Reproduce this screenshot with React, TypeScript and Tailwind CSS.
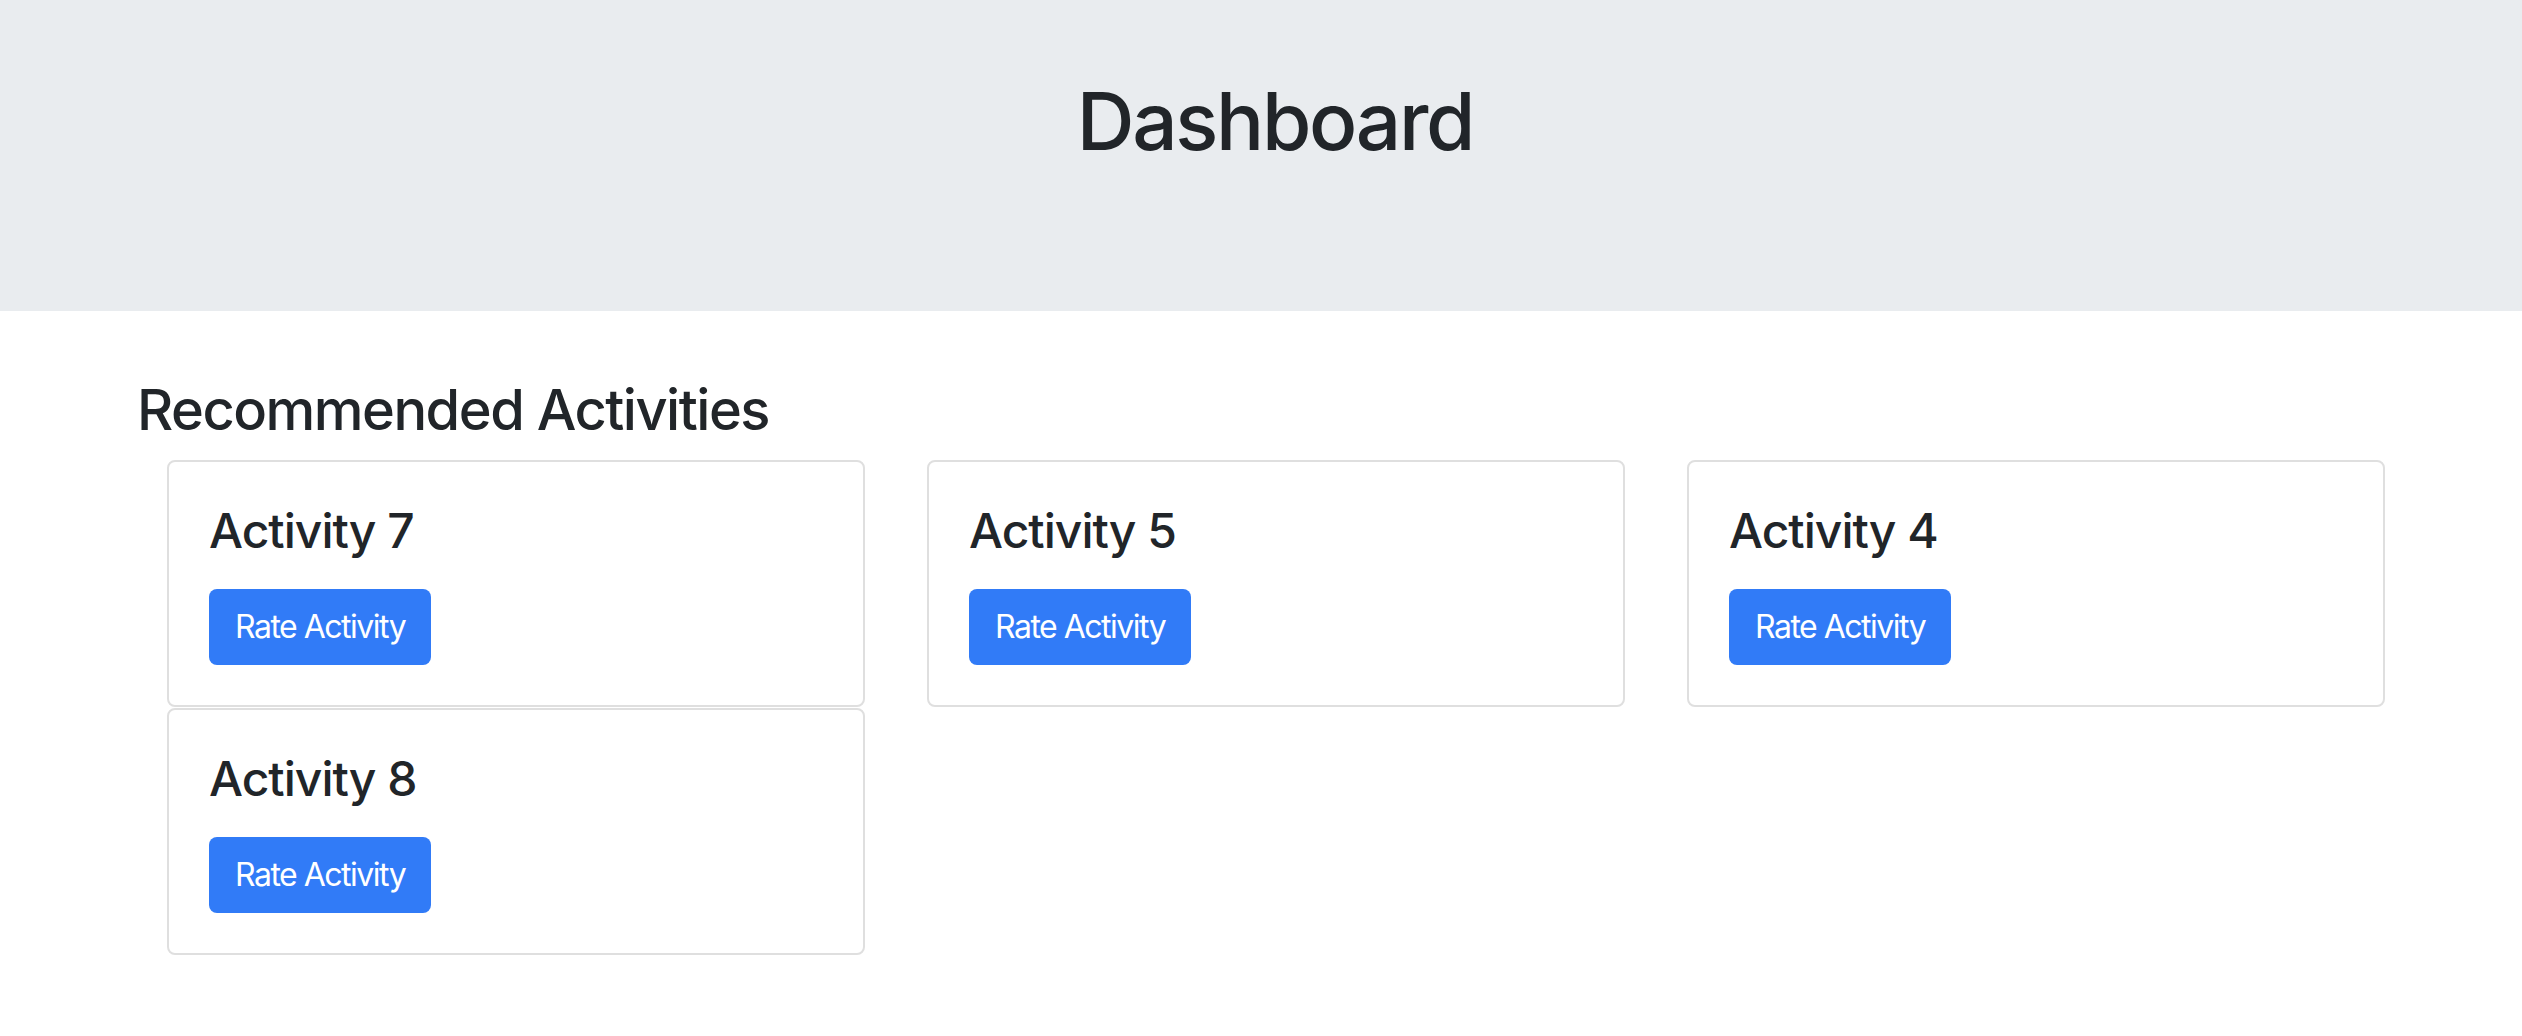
import React from "react";

const activities = ["Activity 7", "Activity 5", "Activity 4", "Activity 8"];

function Card({ title }: { title: string }) {
  return (
    <div className="border-2 border-[#dfdfdf] rounded-[8px] bg-white px-[40px] pt-[40px] pb-[40px]">
      <h4 className="text-[48px] leading-[58px] font-medium tracking-[-1px] text-[#212529] mb-[29px]">{title}</h4>
      <button className="h-[76px] px-[26px] rounded-[8px] bg-[#317bf7] text-white text-[32px] leading-[48px] font-normal tracking-[-1.5px]">
        Rate Activity
      </button>
    </div>
  );
}

export default function App() {
  return (
    <div className="min-h-screen bg-white text-[#212529]" style={{ fontFamily: "Inter, 'Noto Sans', sans-serif" }}>
      <header className="h-[311px] bg-[#e9ecef] pt-[73px] pl-[28px]">
        <h1 className="text-center text-[80px] leading-[96px] font-medium tracking-[-2.3px]">Dashboard</h1>
      </header>
      <main className="pt-[66px] pl-[137px]">
        <h3 className="text-[56px] leading-[67px] font-medium tracking-[-1.5px] mb-[16px]">Recommended Activities</h3>
        <div className="ml-[30px] grid grid-cols-[repeat(3,698px)] gap-x-[62px] gap-y-[1px]">
          {activities.map((a) => (
            <Card key={a} title={a} />
          ))}
        </div>
      </main>
    </div>
  );
}
